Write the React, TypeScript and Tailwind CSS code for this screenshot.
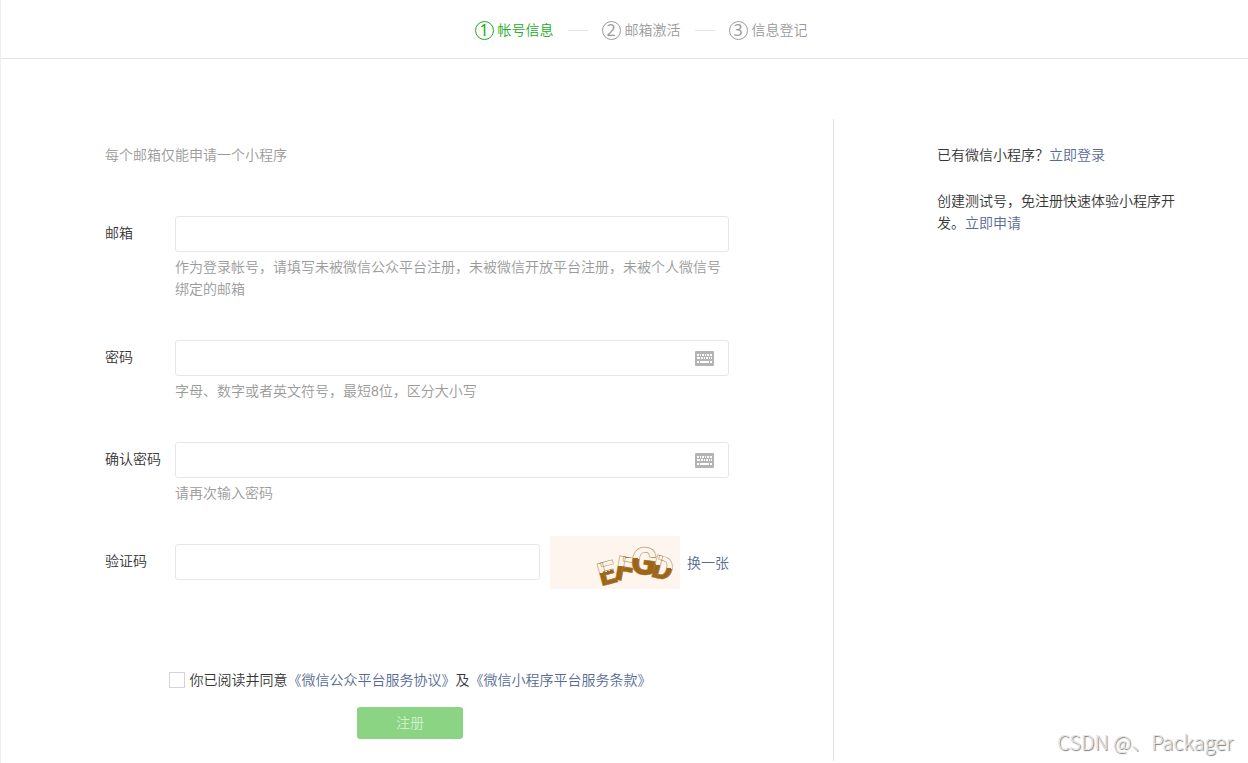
import { useState } from 'react';
import type { ReactNode } from 'react';
import clsx from 'clsx';

const steps = ['帐号信息', '邮箱激活', '信息登记'];

const captchaLetters = [
  { char: 'E', x: 57, y: 37, size: 32, angle: -15 },
  { char: 'F', x: 75, y: 33, size: 34, angle: 10 },
  { char: 'G', x: 94, y: 25, size: 38, angle: 8 },
  { char: 'D', x: 113, y: 32, size: 32, angle: 15 },
];

function Steps({ current }: { current: number }) {
  return (
    <ol className="flex items-center gap-[14px]">
      {steps.map((label, i) => (
        <li key={label} className="flex items-center gap-[14px]">
          {i > 0 && <span className="h-px w-5 bg-[#e4e4e4]" />}
          <span
            className={clsx(
              'flex items-center gap-1',
              i === current ? 'text-[#1aad19]' : 'text-[#9a9a9a]'
            )}
          >
            <span className="flex h-[19px] w-[19px] items-center justify-center rounded-full border border-current font-['Noto_Sans',sans-serif] text-base leading-4 font-normal">
              {i + 1}
            </span>
            {label}
          </span>
        </li>
      ))}
    </ol>
  );
}

function KeyboardIcon() {
  return (
    <svg viewBox="0 0 19 15" className="h-[15px] w-[19px]" aria-hidden="true">
      <rect width="19" height="15" rx="1" fill="#b4b4b4" />
      <g fill="#fff">
        <path d="M2 3h2v2H2zM5 3h1v2H5zM7 3h2v2H7zM10 3h1v2h-1zM12 3h2v2h-2zM15 3h2v2h-2z" />
        <path d="M2 6h3v2H2zM6 6h2v2H6zM9 6h1v2H9zM11 6h2v2h-2zM14 6h1v2h-1zM16 6h1v2h-1z" />
        <path d="M2 10h2v2H2zM5 10h9v2H5zM15 10h2v2h-2z" />
      </g>
    </svg>
  );
}

function Captcha() {
  return (
    <svg viewBox="0 0 130 53" className="h-[53px] w-[130px] shrink-0 bg-[#fef6ee]">
      <defs>
        <linearGradient id="half" x1="0" y1="0" x2="0" y2="1">
          <stop offset="0.45" stopColor="#9c6517" stopOpacity="0" />
          <stop offset="0.45" stopColor="#9c6517" />
        </linearGradient>
      </defs>
      {captchaLetters.map(({ char, x, y, size, angle }) => (
        <text
          key={char}
          x={x}
          y={y + size * 0.355}
          fontSize={size}
          textAnchor="middle"
          transform={`rotate(${angle} ${x} ${y})`}
          fill="url(#half)"
          stroke="#a87733"
          strokeWidth="0.5"
          className="font-['Roboto',sans-serif] font-black"
        >
          {char}
        </text>
      ))}
    </svg>
  );
}

interface FieldProps {
  id: string;
  label: string;
  type?: string;
  hint: string;
  icon?: ReactNode;
}

const inputClass =
  'h-9 w-full min-w-0 rounded-[3px] border border-[#e7e7eb] bg-white px-[10px] outline-none';

function Field({ id, label, type = 'text', hint, icon }: FieldProps) {
  return (
    <div className="mb-10 flex">
      <label htmlFor={id} className="w-[70px] shrink-0 pt-[6px]">
        {label}
      </label>
      <div className="min-w-0 flex-1">
        <div className="relative">
          <input id={id} type={type} className={inputClass} />
          {icon && <span className="absolute top-[11px] right-[15px]">{icon}</span>}
        </div>
        <p className="mt-1 text-[#9a9a9a]">{hint}</p>
      </div>
    </div>
  );
}

export default function App() {
  const [agreed, setAgreed] = useState(false);

  return (
    <div className="relative min-h-screen border-l border-[#eeeeee] bg-white font-['Liberation_Sans','Noto_Sans_CJK_SC',sans-serif] text-sm leading-[22px] font-[350] text-[#353535]">
      <header className="flex justify-center border-b border-[#e4e4e4] pt-[19px] pb-[17px] pl-[33px]">
        <Steps current={0} />
      </header>

      <main className="flex pt-[60px]">
        <section className="min-w-0 flex-1 border-r border-[#e4e4e4] px-[104px] pt-[25px] pb-[22px]">
          <p className="mb-[50px] text-[#9a9a9a]">每个邮箱仅能申请一个小程序</p>

          <form onSubmit={(e) => e.preventDefault()}>
            <Field
              id="email"
              label="邮箱"
              hint="作为登录帐号，请填写未被微信公众平台注册，未被微信开放平台注册，未被个人微信号绑定的邮箱"
            />
            <Field
              id="password"
              label="密码"
              type="password"
              hint="字母、数字或者英文符号，最短8位，区分大小写"
              icon={<KeyboardIcon />}
            />
            <div className="-mb-2">
              <Field
                id="confirm"
                label="确认密码"
                type="password"
                hint="请再次输入密码"
                icon={<KeyboardIcon />}
              />
            </div>

            {/* Captcha */}
            <div className="flex">
              <label htmlFor="captcha" className="w-[70px] shrink-0 pt-[14px]">
                验证码
              </label>
              <div className="min-w-0 flex-1 pt-2">
                <input id="captcha" type="text" className={inputClass} />
              </div>
              <div className="ml-[10px] flex shrink-0 items-center gap-[7px]">
                <Captcha />
                <a href="#" className="text-[#576b95]">
                  换一张
                </a>
              </div>
            </div>

            {/* Agreement */}
            <div className="mt-20 flex flex-col items-center gap-4 pr-[14px]">
              <div className="flex items-center gap-[5px]">
                <input
                  id="agree"
                  type="checkbox"
                  checked={agreed}
                  onChange={(e) => setAgreed(e.target.checked)}
                  className="h-4 w-4 appearance-none border border-[#d4d4d4] bg-white checked:bg-[#1aad19]"
                />
                <label htmlFor="agree">
                  你已阅读并同意
                  <a href="#" className="text-[#576b95]">
                    《微信公众平台服务协议》
                  </a>
                  及
                  <a href="#" className="text-[#576b95]">
                    《微信小程序平台服务条款》
                  </a>
                </label>
              </div>
              <button
                type="submit"
                disabled={!agreed}
                className="h-8 w-[106px] rounded-[3px] bg-[#1aad19] text-white disabled:bg-[#8ad484] disabled:text-[#d0eece]"
              >
                注册
              </button>
            </div>
          </form>
        </section>

        <aside className="w-[414px] shrink-0 pt-[25px] pr-[67px] pl-[103px]">
          <p>
            已有微信小程序？
            <a href="#" className="text-[#576b95]">
              立即登录
            </a>
          </p>
          <p className="mt-6">
            创建测试号，免注册快速体验小程序开发。
            <a href="#" className="text-[#576b95]">
              立即申请
            </a>
          </p>
        </aside>
      </main>

      <div className="absolute right-[15px] bottom-[9px] font-['Noto_Sans_CJK_SC',sans-serif] text-xl leading-6 font-light text-[#e4e4e4] [text-shadow:1px_1px_1px_#777777]">
        CSDN @、Packager
      </div>
    </div>
  );
}
